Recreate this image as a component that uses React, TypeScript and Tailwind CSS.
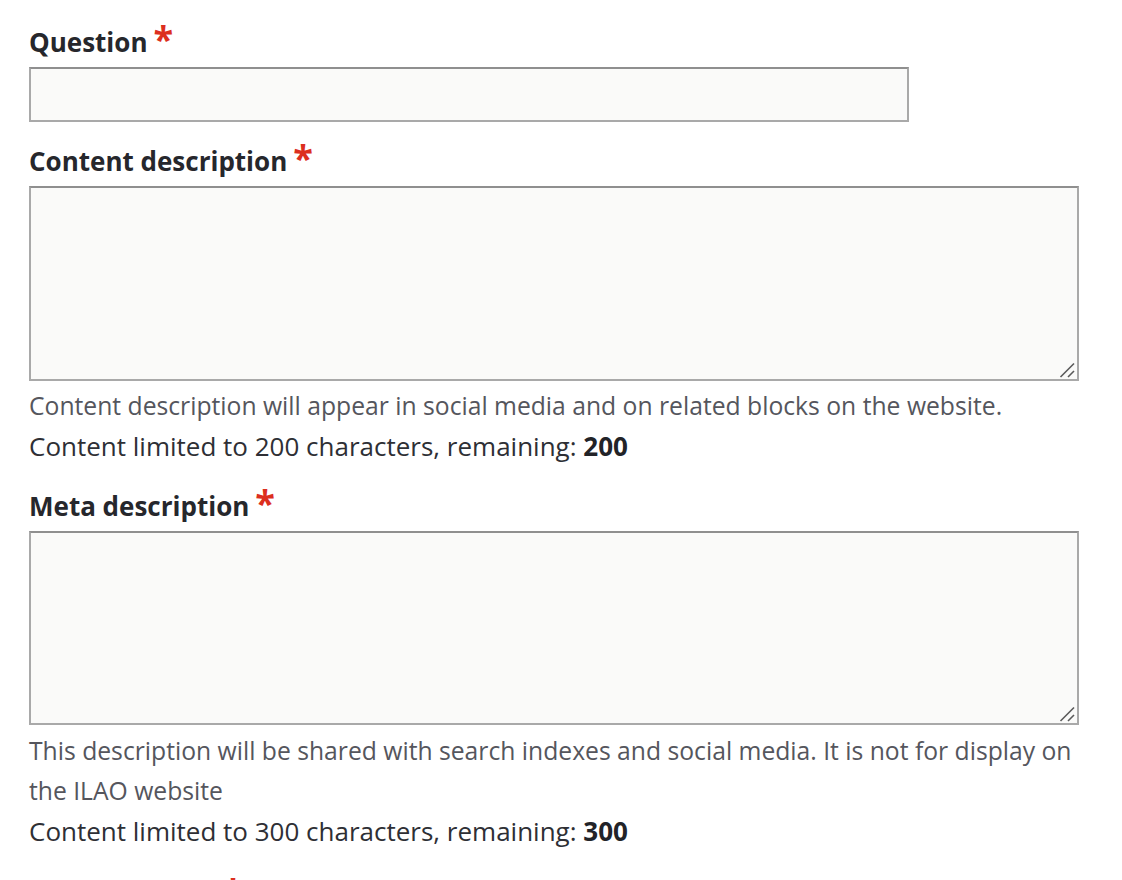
import React from 'react';

const fieldClass =
  'block bg-[#fafaf9] border-2 border-[#a9a9a9] border-t-[#8f8f8f] outline-none';

const Asterisk = () => (
  <span className="ml-[6px] align-top text-[36px] leading-[30px] font-bold text-[#dc2f1e]">*</span>
);

const Label: React.FC<{ htmlFor: string; children: React.ReactNode }> = ({ htmlFor, children }) => (
  <label
    htmlFor={htmlFor}
    className="block mb-[7px] text-[26px] leading-[36px] font-bold text-[#26272c]"
  >
    {children}
    <Asterisk />
  </label>
);

const Help: React.FC<{ children: React.ReactNode; className?: string }> = ({ children, className = '' }) => (
  <div className={`text-[24.7px] leading-[40px] text-[#55565d] ${className}`}>{children}</div>
);

const Counter: React.FC<{ limit: number }> = ({ limit }) => (
  <div className="text-[26px] leading-[40px] text-[#2e2f35]">
    Content limited to {limit} characters, remaining: <strong className="text-[#222328]">{limit}</strong>
  </div>
);

// Textarea with a drawn resize grip in the corner
const Area: React.FC<{ id: string; height: string }> = ({ id, height }) => (
  <div className="relative w-[1050px]">
    <textarea id={id} className={`${fieldClass} w-[1050px] ${height} resize-none`} />
    <svg
      className="absolute right-[4px] bottom-[3px] pointer-events-none"
      width="16"
      height="16"
      viewBox="0 0 16 16"
    >
      <line x1="1.5" y1="15" x2="15" y2="1.5" stroke="#5a5a5a" strokeWidth="1.6" />
      <line x1="9" y1="15" x2="15" y2="9" stroke="#5a5a5a" strokeWidth="1.6" />
    </svg>
  </div>
);

export default function App() {
  return (
    <div
      className="bg-white min-h-screen pl-[29px] pt-[24px] overflow-hidden"
      style={{ fontFamily: '"Open Sans", "Noto Sans", sans-serif' }}
    >
      {/* Question */}
      <div className="mb-[21px]">
        <Label htmlFor="question">Question</Label>
        <input id="question" type="text" className={`${fieldClass} w-[880px] h-[55px] px-3`} />
      </div>

      {/* Content description */}
      <div className="mb-[22px]">
        <Label htmlFor="content-description">Content description</Label>
        <Area id="content-description" height="h-[195px]" />
        <Help className="mt-[5px]">
          Content description will appear in social media and on related blocks on the website.
        </Help>
        <Counter limit={200} />
      </div>

      {/* Meta description */}
      <div className="mb-[26px]">
        <Label htmlFor="meta-description">Meta description</Label>
        <Area id="meta-description" height="h-[194px]" />
        <Help className="mt-[6px] w-[1060px]">
          This description will be shared with search indexes and social media. It is not for display on
          the ILAO website
        </Help>
        <Counter limit={300} />
      </div>

      {/* Next field, cut off by the viewport */}
      <div>
        <Label htmlFor="legal-category">Legal category</Label>
      </div>
    </div>
  );
}
